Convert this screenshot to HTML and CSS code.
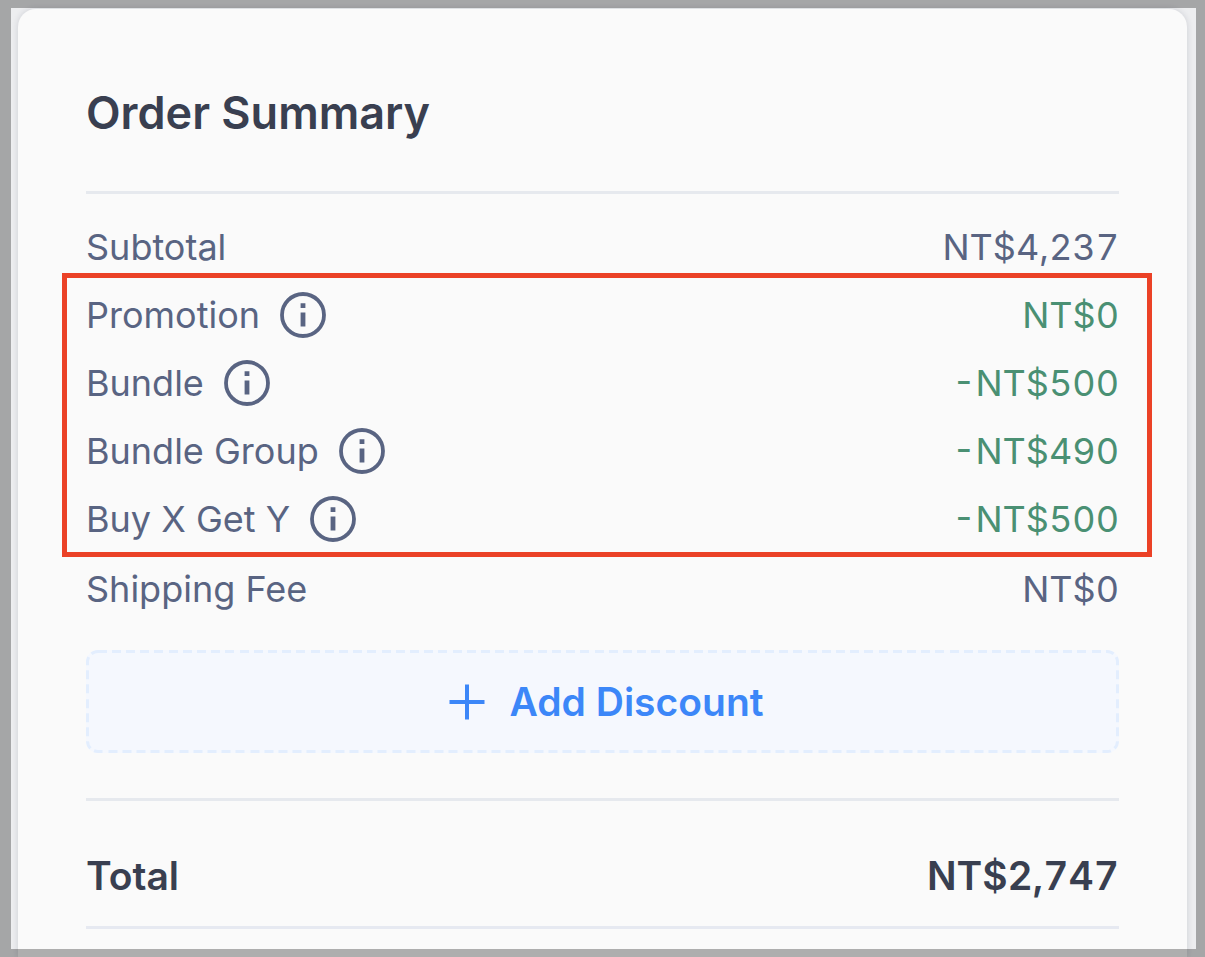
FILE: index.html
```html
<!DOCTYPE html>
<html lang="en">
<head>
  <meta charset="UTF-8">
  <meta name="viewport" content="width=device-width, initial-scale=1.0">
  <title>Order Summary</title>
  <link rel="stylesheet" href="styles.css">
</head>
<body>
  <svg class="sprite" aria-hidden="true">
    <symbol id="icon-info" viewBox="0 0 46 46">
      <circle cx="23" cy="23" r="21" fill="none" stroke="currentColor" stroke-width="3.8"/>
      <path d="M20.6 11.3h4.8v4.8h-4.8zM20.6 20.6h4.8v13.8h-4.8z" fill="currentColor"/>
    </symbol>
  </svg>

  <main class="card">
    <h1 class="title">Order Summary</h1>

    <div class="summary">
      <div class="row">
        <span class="label">Subtotal</span>
        <span class="amount">NT$4,237</span>
      </div>

      <div class="highlight">
        <div class="row">
          <span class="label">Promotion</span>
          <button type="button" class="info" aria-label="About Promotion"><svg><use href="#icon-info"/></svg></button>
          <span class="amount discount">NT$0</span>
        </div>
        <div class="row">
          <span class="label">Bundle</span>
          <button type="button" class="info" aria-label="About Bundle"><svg><use href="#icon-info"/></svg></button>
          <span class="amount discount">-NT$500</span>
        </div>
        <div class="row">
          <span class="label">Bundle Group</span>
          <button type="button" class="info" aria-label="About Bundle Group"><svg><use href="#icon-info"/></svg></button>
          <span class="amount discount">-NT$490</span>
        </div>
        <div class="row">
          <span class="label">Buy X Get Y</span>
          <button type="button" class="info" aria-label="About Buy X Get Y"><svg><use href="#icon-info"/></svg></button>
          <span class="amount discount">-NT$500</span>
        </div>
      </div>

      <div class="row">
        <span class="label">Shipping Fee</span>
        <span class="amount">NT$0</span>
      </div>
    </div>

    <button type="button" class="add-discount">
      <svg class="dashes" aria-hidden="true"><rect width="100%" height="100%" rx="12"/></svg>
      <svg class="plus" viewBox="0 0 36 36" aria-hidden="true">
        <path d="M18 0.5v35M0.5 18h35" fill="none" stroke="currentColor" stroke-width="4"/>
      </svg>
      Add Discount
    </button>

    <div class="row total">
      <span class="label">Total</span>
      <span class="amount">NT$2,747</span>
    </div>
  </main>

  <div class="frame"></div>
</body>
</html>
```
FILE: styles.css
```css
* {
  box-sizing: border-box;
}

body {
  margin: 0;
  min-height: 100vh;
  padding: 9px 18px 0;
  display: flex;
  flex-direction: column;
  overflow: hidden;
  background-color: #edeef0;
  font-family: Inter, "Liberation Sans", sans-serif;
  font-size: 36px;
  color: #596482;
}

button {
  font-family: inherit;
  border: none;
  cursor: pointer;
}

.sprite {
  position: absolute;
  width: 0;
  height: 0;
}

.card {
  flex: 1;
  padding: 76px 68px 0;
  background-color: #fafafa;
  border-radius: 18px 18px 0 0;
  box-shadow: 0 0 6px rgba(40, 44, 70, 0.16);
}

.title {
  margin: 0;
  padding-bottom: 50px;
  border-bottom: 3px solid #e6e9ee;
  font-size: 45px;
  font-weight: 600;
  line-height: 56px;
  color: #393f50;
}

.summary {
  padding: 30px 0 38px;
}

.row {
  display: flex;
  align-items: center;
  height: 46px;
}

.amount {
  margin-left: auto;
  font-variant-numeric: tabular-nums;
}

.discount {
  color: #4a9073;
}

/* red box round the discount rows */
.highlight {
  display: flex;
  flex-direction: column;
  gap: 22px;
  margin: 3px -33px 9px -24px;
  padding: 14px 28px 10px 19px;
  border: 5px solid #eb4126;
}

.info {
  width: 46px;
  height: 46px;
  margin-left: 20px;
  padding: 0;
  background: none;
  color: #596482;
}

.info svg {
  display: block;
  width: 46px;
  height: 46px;
}

.add-discount {
  position: relative;
  display: flex;
  align-items: center;
  justify-content: center;
  gap: 24px;
  width: 100%;
  height: 103px;
  padding: 0 0 0 8px;
  overflow: hidden;
  border-radius: 12px;
  background-color: #f5f8fe;
  font-size: 39px;
  font-weight: 600;
  color: #3c87f8;
}

.dashes {
  position: absolute;
  inset: 0;
  width: 100%;
  height: 100%;
}

/* outer half of the stroke is clipped, 3px stays visible */
.dashes rect {
  fill: none;
  stroke: #e3eefe;
  stroke-width: 6;
  stroke-dasharray: 9 5 9 5 9 5 9 5 9 6;
}

.plus {
  width: 36px;
  height: 36px;
}

.total {
  height: 131px;
  margin-top: 45px;
  padding-top: 23px;
  border-top: 3px solid #e6e9ee;
  border-bottom: 3px solid #e6e9f1;
  font-size: 39px;
  font-weight: 600;
  color: #393f50;
}

/* dimmed edge over the page */
.frame {
  position: fixed;
  inset: 0;
  border: solid rgba(0, 0, 0, 0.3);
  border-width: 8px 9px 8px 11px;
  pointer-events: none;
}
```
